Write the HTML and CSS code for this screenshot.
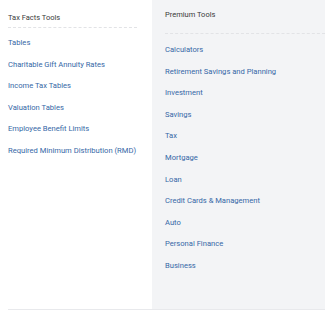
FILE: index.html
```html
<!DOCTYPE html>
<html lang="en">
<head>
    <meta charset="UTF-8">
    <meta name="viewport" content="width=device-width, initial-scale=1.0">
    <title>Tools</title>
    <link rel="stylesheet" href="styles.css">
</head>
<body>

<div class="tools">
    <!-- Tax Facts column -->
    <div class="tools-col tax-col">
        <h3 class="tools-title">Tax Facts Tools</h3>
        <ul class="tools-list">
            <li><a href="#">Tables</a></li>
            <li><a href="#">Charitable Gift Annuity Rates</a></li>
            <li><a href="#">Income Tax Tables</a></li>
            <li><a href="#">Valuation Tables</a></li>
            <li><a href="#">Employee Benefit Limits</a></li>
            <li><a href="#">Required Minimum Distribution (RMD)</a></li>
        </ul>
    </div>

    <!-- Premium column -->
    <div class="tools-col premium-col">
        <h3 class="tools-title">Premium Tools</h3>
        <ul class="tools-list">
            <li><a href="#">Calculators</a></li>
            <li><a href="#">Retirement Savings and Planning</a></li>
            <li><a href="#">Investment</a></li>
            <li><a href="#">Savings</a></li>
            <li><a href="#">Tax</a></li>
            <li><a href="#">Mortgage</a></li>
            <li><a href="#">Loan</a></li>
            <li><a href="#">Credit Cards &amp; Management</a></li>
            <li><a href="#">Auto</a></li>
            <li><a href="#">Personal Finance</a></li>
            <li><a href="#">Business</a></li>
        </ul>
    </div>
</div>

</body>
</html>
```

FILE: styles.css
```css
body {
    font-family: Roboto, "Noto Sans", sans-serif;
    margin: 0;
    padding: 0 0 0 8px;
    background-color: #fff;
}

.tools {
    display: flex;
    height: 309px;
    border-bottom: 1px solid #e8e9ec;
}

.tools-col {
    display: flex;
    flex-direction: column;
}

.tax-col {
    width: 129px;
    padding-right: 15px;
    padding-top: 13px;
}

.premium-col {
    flex: 1;
    background-color: #f3f4f6;
    padding: 10px 0 0 13px;
}

.tools-title {
    margin: 0;
    font-size: 7.5px;
    font-weight: 400;
    line-height: 10px;
    color: #3a3a3a;
    padding-bottom: 4px;
    border-bottom: 1px dashed #e2e3e6;
}

.premium-col .tools-title {
    padding-bottom: 13px;
}

.tools-list {
    list-style: none;
    margin: 4px 0 0;
    padding: 0;
}

.premium-col .tools-list {
    margin-top: 5px;
}

.tools-list li {
    height: 21.6px;
    line-height: 21.6px;
    font-size: 7.6px;
    white-space: nowrap;
}

.tools-list a {
    color: #3567a6;
    text-decoration: none;
}
```
